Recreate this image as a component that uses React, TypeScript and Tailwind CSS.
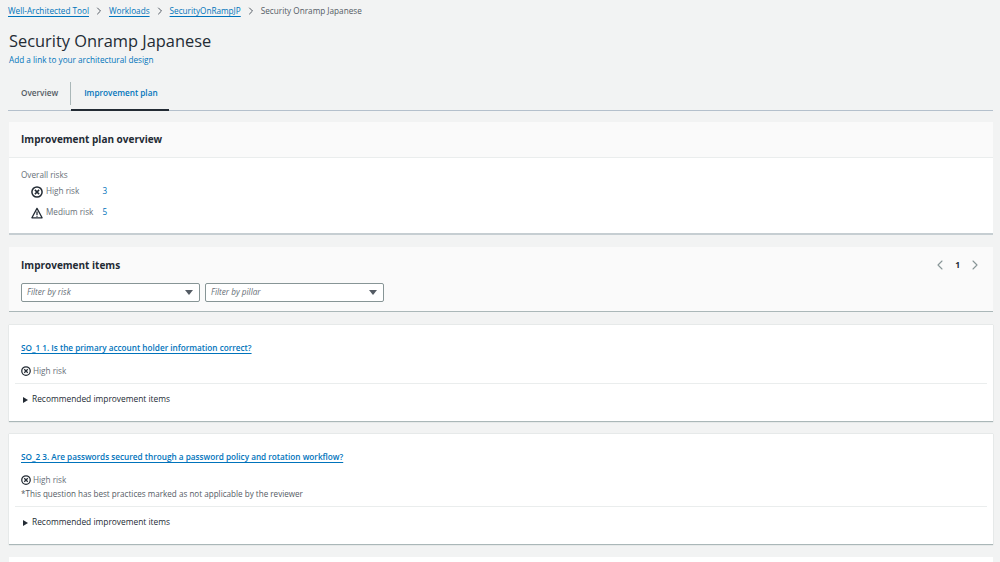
import { ChevronLeft, ChevronRight } from 'lucide-react';

const font = "[font-family:'Open_Sans','Liberation_Sans',sans-serif]";

function HighIcon({ size = 12 }: { size?: number }) {
  return (
    <svg width={size} height={size} viewBox="0 0 16 16" fill="none" stroke="#232b34" strokeWidth="2" className="shrink-0">
      <circle cx="8" cy="8" r="6.8" />
      <path d="M5.2 5.2l5.6 5.6M10.8 5.2l-5.6 5.6" />
    </svg>
  );
}

function MediumIcon() {
  return (
    <svg width="12" height="12" viewBox="0 0 16 16" fill="none" stroke="#232b34" strokeWidth="1.7" className="shrink-0">
      <path d="M8 1.8L1.2 14.4h13.6z" strokeLinejoin="round" />
      <path d="M8 6v4.5M8 11.5v1.4" />
    </svg>
  );
}

function Crumb({ children }: { children: string }) {
  return (
    <>
      <a className="text-[#0073bb] underline underline-offset-2">{children}</a>
      <ChevronRight size={12} strokeWidth={2} className="mx-[4px] text-[#545b64]" />
    </>
  );
}

function Filter({ label }: { label: string }) {
  return (
    <div className="flex h-[19px] w-[179px] items-center justify-between rounded-[2px] border border-[#879596] bg-white pl-[5px] pr-[6px]">
      <span className="text-[8.2px] italic text-[#687078]">{label}</span>
      <svg width="8" height="5" viewBox="0 0 8 5">
        <path d="M0 0h8L4 5z" fill="#545b64" />
      </svg>
    </div>
  );
}

function Item({ title, note }: { title: string; note?: string }) {
  return (
    <section className="border-b border-[#aab7b8] bg-white shadow-[0_0_1px_#aab7b8]">
      <div className="px-3 pb-[6px] pt-[16px]">
        <a className="block w-fit text-[8.2px] font-semibold leading-[13px] text-[#0073bb] underline underline-offset-2">{title}</a>
        <div className="mt-[11px] flex h-[12px] items-center gap-[2px] text-[8.2px] text-[#687078]">
          <HighIcon size={10} />
          <span>High risk</span>
        </div>
        {note && <p className="mt-[1px] text-[8.1px] leading-[13px] text-[#545b64]">{note}</p>}
      </div>
      <div className="mx-[6px] flex h-[38px] items-center gap-[4px] border-t border-[#eaeded] pb-[6px] pl-[8px] text-[8.4px] font-medium text-[#232b34]">
        <svg width="5" height="6" viewBox="0 0 5 6">
          <path d="M0 0l5 3-5 3z" fill="#232b34" />
        </svg>
        <span>Recommended improvement items</span>
      </div>
    </section>
  );
}

export default function App() {
  return (
    <div className={`${font} flex h-[562px] w-[1000px] flex-col overflow-hidden bg-[#f2f3f3] text-[#232b34]`}>
      <header className="pl-[8px] pr-[7px]">
        <nav className="flex h-[22px] items-center text-[8.2px]">
          <Crumb>Well-Architected Tool</Crumb>
          <Crumb>Workloads</Crumb>
          <Crumb>SecurityOnRampJP</Crumb>
          <span className="text-[#545b64]">Security Onramp Japanese</span>
        </nav>
        <h1 className="mt-[7px] pl-px text-[16.4px] font-normal leading-[24px]">Security Onramp Japanese</h1>
        <a className="mt-px block pl-px text-[8.2px] leading-[12px] text-[#0073bb]">Add a link to your architectural design</a>
        <div className="mt-[11px] flex h-[34px] border-b border-[#b4c0cc] text-[8.2px] font-semibold">
          <div className="flex items-center pl-[13px] pr-[12px] text-[#545b64]">Overview</div>
          <div className="my-[5px] w-px bg-[#aab7b8]" />
          <div className="-mb-px flex items-center border-b-2 border-[#232b34] pl-[13px] pr-[11px] text-[#0073bb]">Improvement plan</div>
        </div>
      </header>

      <main className="mt-[11px] flex flex-col pl-[9px] pr-[7px]">
        <section className="h-[113px] border-b-2 border-[#c6ced2] bg-white">
          <div className="flex h-[36px] items-center border-b border-[#eaeded] bg-[#fafafa] px-3 text-[10px] font-bold">
            Improvement plan overview
          </div>
          <div className="px-3 pt-[10px] text-[8.2px] text-[#687078]">
            <div className="leading-[14px]">Overall risks</div>
            <div className="mt-[3px] grid w-fit grid-cols-[auto_auto] items-center gap-x-[9px] gap-y-[8px] pl-[10px]">
              <div className="flex h-[13px] items-center gap-[3px]"><HighIcon /> High risk</div>
              <span className="text-[#0073bb]">3</span>
              <div className="flex h-[13px] items-center gap-[3px]"><MediumIcon /> Medium risk</div>
              <span className="text-[#0073bb]">5</span>
            </div>
          </div>
        </section>

        <section className="mt-[12px] h-[65px] border-b border-[#aab7b8] bg-[#fafafa] pl-3 pr-[10px]">
          <div className="flex h-[36px] items-center justify-between">
            <h2 className="text-[10px] font-bold">Improvement items</h2>
            <div className="flex items-center gap-[7px] text-[#879596]">
              <ChevronLeft size={16} strokeWidth={1.6} />
              <span className="text-[8.5px] font-bold text-[#232b34]">1</span>
              <ChevronRight size={16} strokeWidth={1.6} />
            </div>
          </div>
          <div className="flex gap-[5px]">
            <Filter label="Filter by risk" />
            <Filter label="Filter by pillar" />
          </div>
        </section>

        <div className="mt-[13px] flex flex-col gap-[12px]">
          <Item title="SO_1 1. Is the primary account holder information correct?" />
          <Item
            title="SO_2 3. Are passwords secured through a password policy and rotation workflow?"
            note="*This question has best practices marked as not applicable by the reviewer"
          />
          <section className="h-[40px] bg-white" />
        </div>
      </main>
    </div>
  );
}
